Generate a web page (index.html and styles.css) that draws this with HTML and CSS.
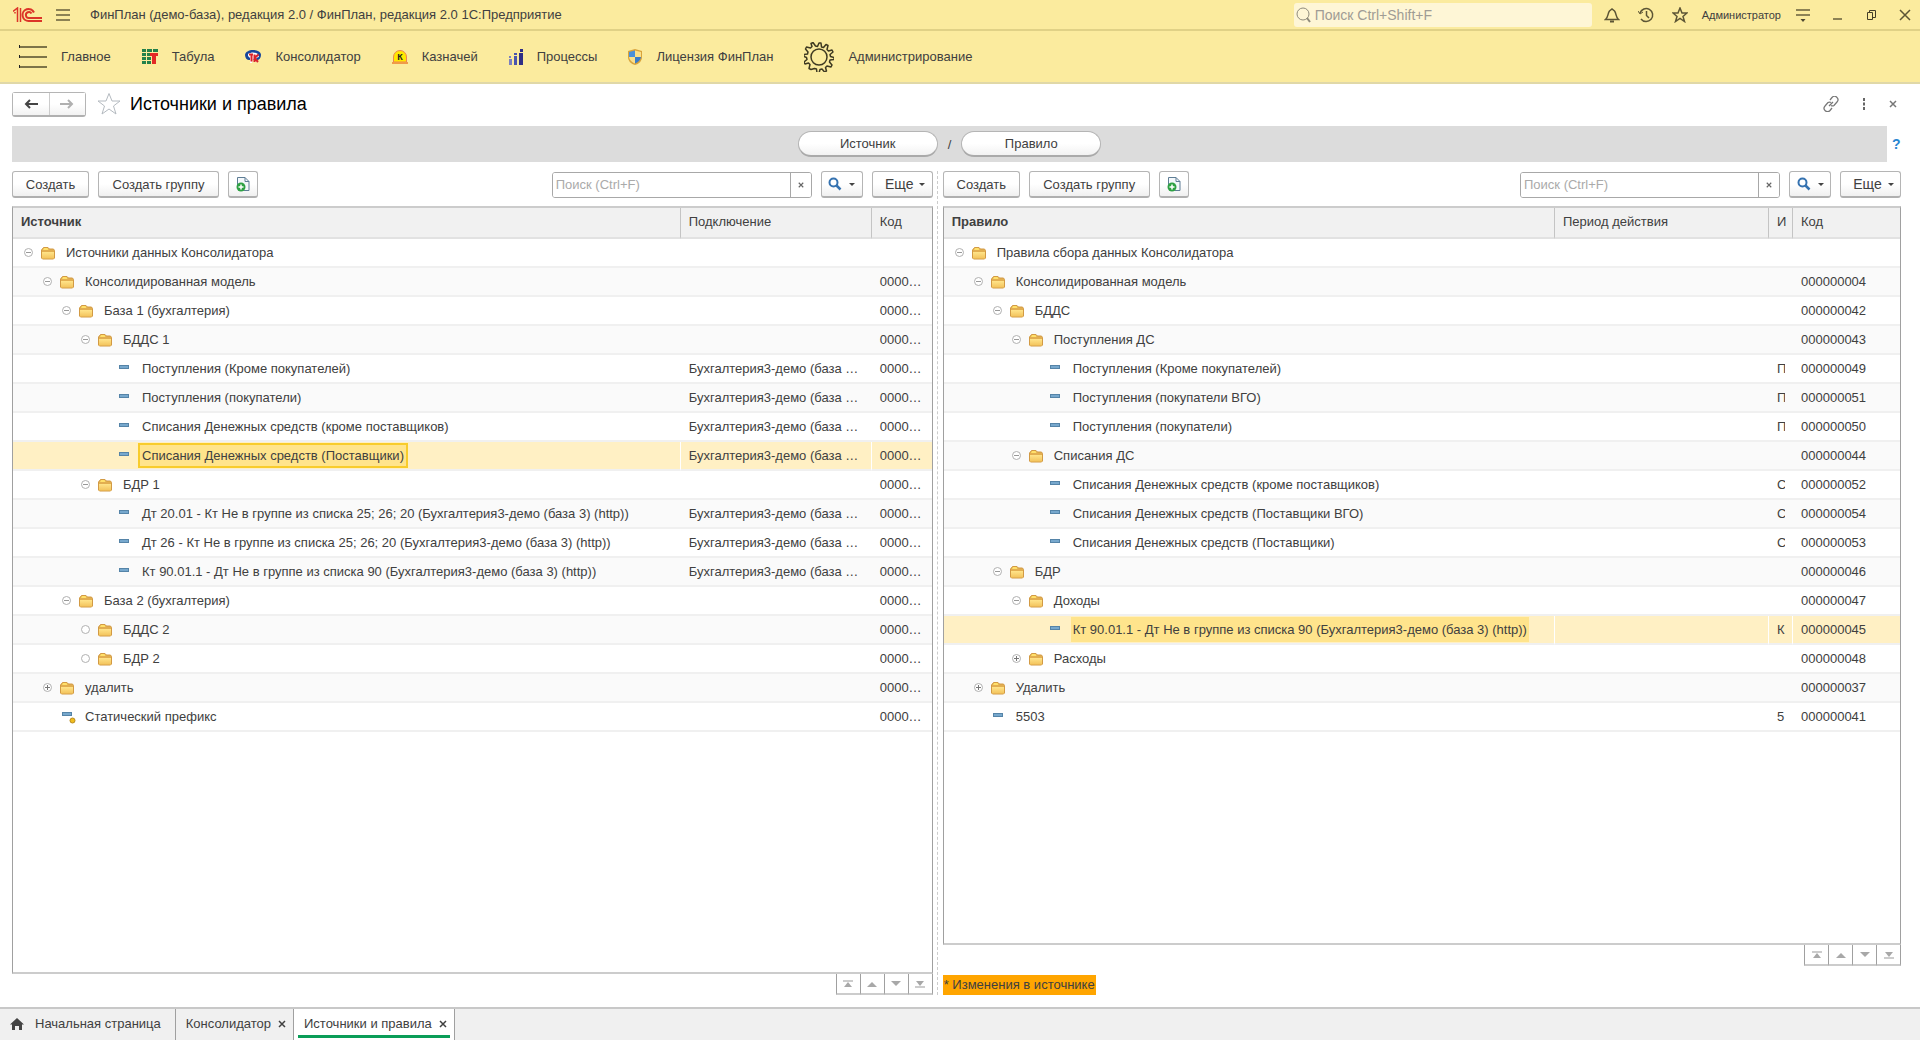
FILE: index.html
```html
<!DOCTYPE html>
<html lang="ru">
<head>
    <meta charset="UTF-8">
    <title>Источники и правила</title>
    <link rel="stylesheet" href="styles.css">
</head>
<body>
    <!-- shared icons -->
    <svg class="sprite" aria-hidden="true">
        <defs>
            <linearGradient id="folder-fill" x1="0" y1="0" x2="0" y2="1">
                <stop offset="0" stop-color="#ffe48a"/>
                <stop offset="1" stop-color="#f3c35c"/>
            </linearGradient>
        </defs>
        <symbol id="folder" viewBox="0 0 14 14">
            <path d="M.5 12V4l2-2.500h4.500L8.500 3h4l1 1.500V12l-1 1H1.500z" fill="#e2ae50" stroke="#d29a44"/>
            <path d="M2 4l1-2h3.500l1 2z" fill="#ffe06a"/>
            <path d="M1 6h12v6.500H1z" fill="url(#folder-fill)"/>
        </symbol>
        <symbol id="item" viewBox="0 0 10 6">
            <path d="M0 1h10v4H0z" fill="#5584a8"/>
            <path d="M1 2h8v2H1z" fill="#77a8cd"/>
        </symbol>
        <symbol id="item-predefined" viewBox="0 0 14 14">
            <path d="M0 2h10v4H0z" fill="#5584a8"/>
            <path d="M1 3h8v2H1z" fill="#77a8cd"/>
            <circle cx="10.500" cy="10.500" r="2.500" fill="#f0bd1e" stroke="#b98a1c"/>
        </symbol>
        <symbol id="minus" viewBox="0 0 9 9">
            <circle cx="4.500" cy="4.500" r="4" fill="#fff" stroke="#b0b0b0"/>
            <path d="M2 4.500h5" stroke="#999"/>
        </symbol>
        <symbol id="plus" viewBox="0 0 9 9">
            <circle cx="4.500" cy="4.500" r="4" fill="#fff" stroke="#b0b0b0"/>
            <path d="M2 4.500h5M4.500 2v5" stroke="#777"/>
        </symbol>
        <symbol id="empty" viewBox="0 0 9 9">
            <circle cx="4.500" cy="4.500" r="4" fill="#fff" stroke="#b0b0b0"/>
        </symbol>
        <symbol id="copy" viewBox="0 0 14 16">
            <path d="M1.500 9V1.500H9l4 4v9H8" fill="#f4f8fb" stroke="#5e7d95"/>
            <path d="M9 1.500v4h4" fill="none" stroke="#5e7d95"/>
            <circle cx="5" cy="11" r="4.500" fill="#2ea043"/>
            <path d="M5 8.500v5M2.500 11h5" stroke="#fff" stroke-width="1.500"/>
        </symbol>
        <symbol id="loupe" viewBox="0 0 14 14">
            <circle cx="5.500" cy="5.500" r="4" fill="#fff" stroke="#3572b0" stroke-width="2"/>
            <path d="M8.500 8.500l4 4" stroke="#3572b0" stroke-width="2.500"/>
        </symbol>
        <symbol id="cross" viewBox="0 0 8 8">
            <path d="M1 1l6 6M7 1l-6 6" fill="none" stroke="currentColor" stroke-width="1.500"/>
        </symbol>
        <symbol id="go-first" viewBox="0 0 10 8">
            <path d="M0 1h10" stroke="#ccc" stroke-width="2"/><path d="M1 7l4-5 4 5z" fill="#a8a8a8"/>
        </symbol>
        <symbol id="go-up" viewBox="0 0 10 8"><path d="M0 7l5-5 5 5z" fill="#a8a8a8"/></symbol>
        <symbol id="go-down" viewBox="0 0 10 8"><path d="M0 1l5 5 5-5z" fill="#a8a8a8"/></symbol>
        <symbol id="go-last" viewBox="0 0 10 8">
            <path d="M0 7h10" stroke="#ccc" stroke-width="2"/><path d="M1 1l4 5 4-5z" fill="#a8a8a8"/>
        </symbol>
    </svg>

    <header class="titlebar">
        <svg class="logo" width="29" height="16" viewBox="0 0 29 16" fill="none" stroke="#dc3428" stroke-width="2">
            <path d="M0 4.500L4.500 1v14M2 6.500V5M7.500 1v14" stroke-width="1.500"/>
            <path d="M21 5.500a6 6 0 1 0-5 8.500h13"/>
            <path d="M18.500 6.500a3 3 0 1 0-2.500 4.500h13"/>
        </svg>
        <button class="plain" aria-label="Меню">
            <svg width="14" height="14" viewBox="0 0 14 14" stroke="#8c8254" stroke-width="2"><path d="M0 2h14M0 7h14M0 12h14"/></svg>
        </button>
        <span class="app-name">ФинПлан (демо-база), редакция 2.0 / ФинПлан, редакция 2.0 1С:Предприятие</span>
        <div class="global-search">
            <svg width="15" height="16" viewBox="0 0 15 16" fill="none" stroke="#8f8b7c"><circle cx="7" cy="7" r="6"/><path d="M11 11l3 4" stroke-width="2"/></svg>
            <input type="text" aria-label="Поиск" placeholder="Поиск Ctrl+Shift+F">
        </div>
        <div class="system">
            <button class="plain" aria-label="Уведомления">
                <svg width="16" height="16" viewBox="0 0 16 16" fill="none" stroke="#5c5535" stroke-width="1.500"><path d="M1.500 12.500c3-2.500 2-6 4-8.500L8 2l2.500 2c2 2.500 1 6 4 8.500z"/><path d="M6 14.500h4" stroke-width="2"/></svg>
            </button>
            <button class="plain" aria-label="История">
                <svg width="16" height="16" viewBox="0 0 16 16" fill="none" stroke="#5c5535" stroke-width="1.500"><path d="M2 6a6.500 6.500 0 1 1 1 6M8.500 4v4.500L11 11"/><path d="M0 4l2 3 3-2" stroke-width="1"/></svg>
            </button>
            <button class="plain" aria-label="Избранное">
                <svg width="16" height="16" viewBox="0 0 16 16" fill="none" stroke="#5c5535" stroke-width="1.500"><path d="M8 1l2 5h5l-4 3.500 1.500 5L8 11.500l-4.500 3 1.500-5L1 6h5z"/></svg>
            </button>
            <a class="user" href="#">Администратор</a>
            <button class="plain" aria-label="Настройки">
                <svg width="14" height="16" viewBox="0 0 14 16"><path d="M0 3h14M0 8h14" stroke="#8c8254" stroke-width="2"/><path d="M4.500 12h5L7 15z" fill="#4d4730"/></svg>
            </button>
            <button class="plain" aria-label="Свернуть">
                <svg width="14" height="16" viewBox="0 0 14 16" stroke="#8c8254" stroke-width="2"><path d="M3 12h9"/></svg>
            </button>
            <button class="plain" aria-label="Развернуть">
                <svg width="14" height="16" viewBox="0 0 14 16" fill="none" stroke="#443e28"><path d="M3.500 5.500h5v7h-5zM5.500 5V3.500h6v7H9"/></svg>
            </button>
            <button class="plain" aria-label="Закрыть">
                <svg width="14" height="16" viewBox="0 0 14 16" stroke="#5c5535" stroke-width="1.500"><path d="M2 3l10 10M12 3L2 13"/></svg>
            </button>
        </div>
    </header>

    <nav class="sections">
        <a href="#">
            <svg width="28" height="24" viewBox="0 0 28 24" stroke="#7d7448" stroke-width="2"><path d="M0 2h28M0 12h28M0 22h28"/><path d="M.5 0v3M.5 10v3M.5 20v3" stroke="#222" stroke-width="1"/></svg>
            Главное
        </a>
        <a href="#">
            <svg width="16" height="16" viewBox="0 0 16 16"><path d="M0 0h4v3H0zM5 0h5v3H5zM11 0h5v3h-5zM0 4h4v3H0zM5 4h3v3H5zM0 8h4v3H0zM5 8h4v3H5zM0 12h4v3H0zM5 12h4v3H5z" fill="#23814a"/><path d="M8 4h8v3h-2v8h-4V7H8z" fill="#e22a26"/></svg>
            Табула
        </a>
        <a href="#">
            <svg width="16" height="16" viewBox="0 0 16 16"><path d="M0 6c0-3 4-5 8-5s8 2 8 5-2 5-4 5H4C2 11 0 9 0 6z" fill="#17479c"/><path d="M3 5c3-2 7-2 10 0l1 3-3 1 2 4h-2l-3-3-1 4H5V9L3 7z" fill="#fff"/><path d="M4 5.500h4M6.500 6v6.500M9.500 5.500V13M13.500 5.500l-4 3.500 3.500 4" stroke="#d9232a" stroke-width="2" fill="none"/></svg>
            Консолидатор
        </a>
        <a href="#">
            <svg width="16" height="16" viewBox="0 0 16 16"><path d="M1.500 13V8a6.500 6.500 0 0 1 13 0v5z" fill="#ffe900" stroke="#ef8354"/><path d="M0 14h16" stroke="#ef9a4a" stroke-width="2"/><text class="icon-letter" x="8" y="11" text-anchor="middle">К</text></svg>
            Казначей
        </a>
        <a href="#">
            <svg width="14" height="16" viewBox="0 0 14 16"><path d="M0 10h3v6H0zM0 7h2v2H0z" fill="#7a7fc0"/><path d="M5 7h3v9H5zM5 4h3v2H5z" fill="#4a55ad"/><path d="M10 4h4v12h-4zM11 0h3v3h-3z" fill="#2f2f86"/></svg>
            Процессы
        </a>
        <a href="#">
            <svg width="14" height="16" viewBox="0 0 14 16"><path d="M7 0l7 2v6c0 4-3 7-7 8-4-1-7-4-7-8V2z" fill="#d9a43c"/><path d="M7 1.500V8H1V3z" fill="#4a90d9"/><path d="M7 1.500V8h6V3z" fill="#fbe08a"/><path d="M7 8v6.500C4 13.500 1.500 11 1 8z" fill="#fbe08a"/><path d="M7 8v6.500c3-1 5.500-3.500 6-6.500z" fill="#3a7cc8"/></svg>
            Лицензия ФинПлан
        </a>
        <a href="#">
            <svg width="30" height="30" viewBox="0 0 30 30" fill="none" stroke="#3f3a22" stroke-width="1.500" stroke-linejoin="round"><circle cx="15" cy="15" r="8"/><path d="M13.500 4.500L15 1h2l.500 4 2 .5L22 2.500l2 1-1 4 1.500 1.500 3.500-1 1 2-3 2.500.500 2 3.500 1v2l-4 .500-.500 2 2.500 3-1 2-4-1-1.500 1.500 1 3.500-2 1-2.500-3-2 .500-1 3.500h-2l-.500-4-2-.500L7 27.500l-2-1 1-4L4.500 21 1 22l-1-2 3-2.500-.500-2L0 14.500v-2l3.500-.500.500-2L1.500 7l1-2 4 1L8 4.500 7 1.500l2-1 2.500 3.500z"/></svg>
            Администрирование
        </a>
    </nav>

    <main class="form">
        <div class="form-header">
            <div class="history">
                <button aria-label="Назад"><svg width="14" height="10" viewBox="0 0 14 10" fill="none" stroke="#444" stroke-width="2"><path d="M14 5H2M6 1L2 5l4 4"/></svg></button>
                <button aria-label="Вперед"><svg width="14" height="10" viewBox="0 0 14 10" fill="none" stroke="#b0b0b0" stroke-width="2"><path d="M0 5h12M8 1l4 4-4 4"/></svg></button>
            </div>
            <button class="plain" aria-label="В избранное">
                <svg width="24" height="24" viewBox="0 0 24 24" fill="none" stroke="#b4bac0"><path d="M12 1.500l3 7.500h8l-6.500 5 2.500 8-7-5-7 5 2.500-8L1 9h8z"/></svg>
            </button>
            <h1>Источники и правила</h1>
            <div class="form-tools">
                <button class="plain" aria-label="Ссылка">
                    <svg width="16" height="16" viewBox="0 0 16 16" fill="none" stroke="#777"><path d="M7 4l2-2.500a3 3 0 0 1 5 4.500l-3 3.500a3 3 0 0 1-3 0M9 12l-2 2.500a3 3 0 0 1-5-4.500l3-3.500a3 3 0 0 1 3 0M6 10l4-4" stroke-width="1.250"/></svg>
                </button>
                <button class="plain" aria-label="Еще">
                    <svg width="4" height="12" viewBox="0 0 4 12" fill="#666"><path d="M1 0h2v3H1zM1 4.500h2v3H1zM1 9h2v3H1z"/></svg>
                </button>
                <button class="plain gray" aria-label="Закрыть"><svg width="8" height="8"><use href="#cross"/></svg></button>
            </div>
        </div>

        <div class="link-row">
            <div class="link-bar">
                <button class="pill">Источник</button>
                <span>/</span>
                <button class="pill">Правило</button>
            </div>
            <a class="help" href="#">?</a>
        </div>

        <div class="panels">
            <section class="panel">
                <div class="toolbar">
                    <button class="btn">Создать</button>
                    <button class="btn btn-group">Создать группу</button>
                    <button class="btn btn-icon" aria-label="Скопировать"><svg width="14" height="16"><use href="#copy"/></svg></button>
                    <div class="search">
                        <input type="text" aria-label="Поиск источника" placeholder="Поиск (Ctrl+F)">
                        <button aria-label="Очистить"><svg width="6" height="6"><use href="#cross"/></svg></button>
                    </div>
                    <button class="btn btn-find" aria-label="Найти"><svg width="14" height="14"><use href="#loupe"/></svg><i class="caret"></i></button>
                    <button class="btn btn-more">Еще<i class="caret"></i></button>
                </div>
                <div class="list">
                    <table>
                        <colgroup><col><col class="c-conn"><col class="c-code-short"></colgroup>
                        <thead>
                            <tr><th class="main">Источник</th><th>Подключение</th><th>Код</th></tr>
                        </thead>
                        <tbody>
                            <tr><td><div class="node l0"><button class="toggle" aria-label="Свернуть"><svg><use href="#minus"/></svg></button><svg class="folder"><use href="#folder"/></svg><span>Источники данных Консолидатора</span></div></td><td></td><td></td></tr>
                            <tr><td><div class="node l1"><button class="toggle" aria-label="Свернуть"><svg><use href="#minus"/></svg></button><svg class="folder"><use href="#folder"/></svg><span>Консолидированная модель</span></div></td><td></td><td>0000…</td></tr>
                            <tr><td><div class="node l2"><button class="toggle" aria-label="Свернуть"><svg><use href="#minus"/></svg></button><svg class="folder"><use href="#folder"/></svg><span>База 1 (бухгалтерия)</span></div></td><td></td><td>0000…</td></tr>
                            <tr><td><div class="node l3"><button class="toggle" aria-label="Свернуть"><svg><use href="#minus"/></svg></button><svg class="folder"><use href="#folder"/></svg><span>БДДС 1</span></div></td><td></td><td>0000…</td></tr>
                            <tr><td><div class="node leaf l4"><svg class="item"><use href="#item"/></svg><span>Поступления (Кроме покупателей)</span></div></td><td>Бухгалтерия3-демо (база …</td><td>0000…</td></tr>
                            <tr><td><div class="node leaf l4"><svg class="item"><use href="#item"/></svg><span>Поступления (покупатели)</span></div></td><td>Бухгалтерия3-демо (база …</td><td>0000…</td></tr>
                            <tr><td><div class="node leaf l4"><svg class="item"><use href="#item"/></svg><span>Списания Денежных средств (кроме поставщиков)</span></div></td><td>Бухгалтерия3-демо (база …</td><td>0000…</td></tr>
                            <tr class="selected focused"><td><div class="node leaf l4"><svg class="item"><use href="#item"/></svg><span>Списания Денежных средств (Поставщики)</span></div></td><td>Бухгалтерия3-демо (база …</td><td>0000…</td></tr>
                            <tr><td><div class="node l3"><button class="toggle" aria-label="Свернуть"><svg><use href="#minus"/></svg></button><svg class="folder"><use href="#folder"/></svg><span>БДР 1</span></div></td><td></td><td>0000…</td></tr>
                            <tr><td><div class="node leaf l4"><svg class="item"><use href="#item"/></svg><span>Дт 20.01 - Кт Не в группе из списка 25; 26; 20 (Бухгалтерия3-демо (база 3) (http))</span></div></td><td>Бухгалтерия3-демо (база …</td><td>0000…</td></tr>
                            <tr><td><div class="node leaf l4"><svg class="item"><use href="#item"/></svg><span>Дт 26 - Кт Не в группе из списка 25; 26; 20 (Бухгалтерия3-демо (база 3) (http))</span></div></td><td>Бухгалтерия3-демо (база …</td><td>0000…</td></tr>
                            <tr><td><div class="node leaf l4"><svg class="item"><use href="#item"/></svg><span>Кт 90.01.1 - Дт Не в группе из списка 90 (Бухгалтерия3-демо (база 3) (http))</span></div></td><td>Бухгалтерия3-демо (база …</td><td>0000…</td></tr>
                            <tr><td><div class="node l2"><button class="toggle" aria-label="Свернуть"><svg><use href="#minus"/></svg></button><svg class="folder"><use href="#folder"/></svg><span>База 2 (бухгалтерия)</span></div></td><td></td><td>0000…</td></tr>
                            <tr><td><div class="node l3"><button class="toggle" aria-label="Пусто"><svg><use href="#empty"/></svg></button><svg class="folder"><use href="#folder"/></svg><span>БДДС 2</span></div></td><td></td><td>0000…</td></tr>
                            <tr><td><div class="node l3"><button class="toggle" aria-label="Пусто"><svg><use href="#empty"/></svg></button><svg class="folder"><use href="#folder"/></svg><span>БДР 2</span></div></td><td></td><td>0000…</td></tr>
                            <tr><td><div class="node l1"><button class="toggle" aria-label="Развернуть"><svg><use href="#plus"/></svg></button><svg class="folder"><use href="#folder"/></svg><span>удалить</span></div></td><td></td><td>0000…</td></tr>
                            <tr><td><div class="node leaf l1"><svg class="item predefined"><use href="#item-predefined"/></svg><span>Статический префикс</span></div></td><td></td><td>0000…</td></tr>
                        </tbody>
                    </table>
                </div>
                <div class="pager">
                    <button aria-label="В начало"><svg width="10" height="8"><use href="#go-first"/></svg></button>
                    <button aria-label="Вверх"><svg width="10" height="8"><use href="#go-up"/></svg></button>
                    <button aria-label="Вниз"><svg width="10" height="8"><use href="#go-down"/></svg></button>
                    <button aria-label="В конец"><svg width="10" height="8"><use href="#go-last"/></svg></button>
                </div>
            </section>

            <div class="splitter"></div>

            <section class="panel">
                <div class="toolbar">
                    <button class="btn">Создать</button>
                    <button class="btn btn-group">Создать группу</button>
                    <button class="btn btn-icon" aria-label="Скопировать"><svg width="14" height="16"><use href="#copy"/></svg></button>
                    <div class="search">
                        <input type="text" aria-label="Поиск правила" placeholder="Поиск (Ctrl+F)">
                        <button aria-label="Очистить"><svg width="6" height="6"><use href="#cross"/></svg></button>
                    </div>
                    <button class="btn btn-find" aria-label="Найти"><svg width="14" height="14"><use href="#loupe"/></svg><i class="caret"></i></button>
                    <button class="btn btn-more">Еще<i class="caret"></i></button>
                </div>
                <div class="list">
                    <table>
                        <colgroup><col><col class="c-period"><col class="c-mark"><col class="c-code"></colgroup>
                        <thead>
                            <tr><th class="main">Правило</th><th>Период действия</th><th>И</th><th>Код</th></tr>
                        </thead>
                        <tbody>
                            <tr><td><div class="node l0"><button class="toggle" aria-label="Свернуть"><svg><use href="#minus"/></svg></button><svg class="folder"><use href="#folder"/></svg><span>Правила сбора данных Консолидатора</span></div></td><td></td><td></td><td></td></tr>
                            <tr><td><div class="node l1"><button class="toggle" aria-label="Свернуть"><svg><use href="#minus"/></svg></button><svg class="folder"><use href="#folder"/></svg><span>Консолидированная модель</span></div></td><td></td><td></td><td>000000004</td></tr>
                            <tr><td><div class="node l2"><button class="toggle" aria-label="Свернуть"><svg><use href="#minus"/></svg></button><svg class="folder"><use href="#folder"/></svg><span>БДДС</span></div></td><td></td><td></td><td>000000042</td></tr>
                            <tr><td><div class="node l3"><button class="toggle" aria-label="Свернуть"><svg><use href="#minus"/></svg></button><svg class="folder"><use href="#folder"/></svg><span>Поступления ДС</span></div></td><td></td><td></td><td>000000043</td></tr>
                            <tr><td><div class="node leaf l4"><svg class="item"><use href="#item"/></svg><span>Поступления (Кроме покупателей)</span></div></td><td></td><td><div class="mark">П</div></td><td>000000049</td></tr>
                            <tr><td><div class="node leaf l4"><svg class="item"><use href="#item"/></svg><span>Поступления (покупатели ВГО)</span></div></td><td></td><td><div class="mark">П</div></td><td>000000051</td></tr>
                            <tr><td><div class="node leaf l4"><svg class="item"><use href="#item"/></svg><span>Поступления (покупатели)</span></div></td><td></td><td><div class="mark">П</div></td><td>000000050</td></tr>
                            <tr><td><div class="node l3"><button class="toggle" aria-label="Свернуть"><svg><use href="#minus"/></svg></button><svg class="folder"><use href="#folder"/></svg><span>Списания ДС</span></div></td><td></td><td></td><td>000000044</td></tr>
                            <tr><td><div class="node leaf l4"><svg class="item"><use href="#item"/></svg><span>Списания Денежных средств (кроме поставщиков)</span></div></td><td></td><td><div class="mark">С</div></td><td>000000052</td></tr>
                            <tr><td><div class="node leaf l4"><svg class="item"><use href="#item"/></svg><span>Списания Денежных средств (Поставщики ВГО)</span></div></td><td></td><td><div class="mark">С</div></td><td>000000054</td></tr>
                            <tr><td><div class="node leaf l4"><svg class="item"><use href="#item"/></svg><span>Списания Денежных средств (Поставщики)</span></div></td><td></td><td><div class="mark">С</div></td><td>000000053</td></tr>
                            <tr><td><div class="node l2"><button class="toggle" aria-label="Свернуть"><svg><use href="#minus"/></svg></button><svg class="folder"><use href="#folder"/></svg><span>БДР</span></div></td><td></td><td></td><td>000000046</td></tr>
                            <tr><td><div class="node l3"><button class="toggle" aria-label="Свернуть"><svg><use href="#minus"/></svg></button><svg class="folder"><use href="#folder"/></svg><span>Доходы</span></div></td><td></td><td></td><td>000000047</td></tr>
                            <tr class="selected"><td><div class="node leaf l4"><svg class="item"><use href="#item"/></svg><span>Кт 90.01.1 - Дт Не в группе из списка 90 (Бухгалтерия3-демо (база 3) (http))</span></div></td><td></td><td><div class="mark">К</div></td><td>000000045</td></tr>
                            <tr><td><div class="node l3"><button class="toggle" aria-label="Развернуть"><svg><use href="#plus"/></svg></button><svg class="folder"><use href="#folder"/></svg><span>Расходы</span></div></td><td></td><td></td><td>000000048</td></tr>
                            <tr><td><div class="node l1"><button class="toggle" aria-label="Развернуть"><svg><use href="#plus"/></svg></button><svg class="folder"><use href="#folder"/></svg><span>Удалить</span></div></td><td></td><td></td><td>000000037</td></tr>
                            <tr><td><div class="node leaf l1"><svg class="item"><use href="#item"/></svg><span>5503</span></div></td><td></td><td><div class="mark">5</div></td><td>000000041</td></tr>
                        </tbody>
                    </table>
                </div>
                <div class="pager">
                    <button aria-label="В начало"><svg width="10" height="8"><use href="#go-first"/></svg></button>
                    <button aria-label="Вверх"><svg width="10" height="8"><use href="#go-up"/></svg></button>
                    <button aria-label="Вниз"><svg width="10" height="8"><use href="#go-down"/></svg></button>
                    <button aria-label="В конец"><svg width="10" height="8"><use href="#go-last"/></svg></button>
                </div>
                <div class="notice">* Изменения в источнике</div>
            </section>
        </div>
    </main>

    <footer class="tabs">
        <a class="tab home" href="#">
            <svg width="14" height="12" viewBox="0 0 14 12" fill="#444"><path d="M7 0l7 6.500h-2V12H9V8H5v4H2V6.500H0z"/></svg>
            Начальная страница
        </a>
        <div class="tab"><a href="#">Консолидатор</a><button class="plain" aria-label="Закрыть"><svg width="8" height="8"><use href="#cross"/></svg></button></div>
        <div class="tab active"><a href="#">Источники и правила</a><button class="plain" aria-label="Закрыть"><svg width="8" height="8"><use href="#cross"/></svg></button></div>
    </footer>
</body>
</html>
```
FILE: styles.css
```css
* {
    box-sizing: border-box;
}

body {
    display: flex;
    flex-direction: column;
    min-height: 100vh;
    margin: 0;
    background: #fff;
    color: #404040;
    font-family: "Liberation Sans", Arial, sans-serif;
    font-size: 13px;
}

button, input {
    font: inherit;
    color: inherit;
}

button {
    padding: 0;
    cursor: pointer;
}

a {
    color: inherit;
    text-decoration: none;
}

svg {
    display: block;
    flex: none;
}

.sprite {
    position: absolute;
    width: 0;
    height: 0;
}

.plain {
    display: flex;
    border: none;
    background: none;
}

.gray {
    color: #777;
}

/* top yellow bars */
.titlebar {
    display: flex;
    align-items: center;
    height: 31px;
    padding: 0 8px 0 13px;
    background: #fbeb9e;
    border-bottom: 2px solid #e0d186;
}

.logo {
    margin-right: 14px;
}

.app-name {
    margin-left: 20px;
}

.global-search {
    display: flex;
    align-items: center;
    gap: 4px;
    width: 298px;
    height: 24px;
    margin-left: auto;
    padding-left: 2px;
    border-radius: 3px;
    background: #fef6d6;
}

.global-search input {
    flex: 1;
    min-width: 0;
    padding: 0;
    border: none;
    outline: none;
    background: none;
    font-size: 14px;
}

.global-search input::placeholder {
    color: #a09c94;
}

.system {
    display: flex;
    align-items: center;
    gap: 20px;
    margin-left: 13px;
}

.system button {
    justify-content: center;
    width: 14px;
}

.user {
    margin: 0 -5px;
    font-size: 11px;
}

.sections {
    display: flex;
    align-items: center;
    gap: 31px;
    height: 53px;
    padding-left: 19px;
    background: #fbeb9e;
    border-bottom: 2px solid #e0d8a8;
}

.sections a {
    display: flex;
    align-items: center;
    gap: 14px;
}

.icon-letter {
    font-size: 9px;
    font-weight: bold;
    fill: #222;
}

/* form */
.form {
    display: flex;
    flex: 1;
    flex-direction: column;
    padding: 7px 19px 12px 12px;
}

.form-header {
    display: flex;
    align-items: center;
    height: 26px;
    margin-bottom: 9px;
}

.history {
    display: flex;
    width: 74px;
    height: 25px;
    margin-right: 11px;
    border: 1px solid #b5b5b5;
    border-bottom: 2px solid #b0b0b0;
    border-radius: 3px;
}

.history button {
    display: flex;
    flex: 1;
    align-items: center;
    justify-content: center;
    border: none;
    background: linear-gradient(#fff 50%, #f2f2f2);
}

.history button + button {
    border-left: 1px solid #ccc;
}

h1 {
    margin: 0 0 0 9px;
    color: #000;
    font-size: 18px;
    font-weight: normal;
}

.form-tools {
    display: flex;
    align-items: center;
    gap: 23px;
    margin-left: auto;
    padding-right: 4px;
}

.link-row {
    display: flex;
    align-items: center;
    margin-bottom: 9px;
}

.link-bar {
    display: flex;
    flex: 1;
    align-items: center;
    justify-content: center;
    gap: 10px;
    height: 36px;
    background: #dcdcdc;
}

.pill {
    width: 140px;
    height: 26px;
    border: 1px solid #b5b5b5;
    border-bottom: 2px solid #aaa;
    border-radius: 13px;
    background: linear-gradient(#fff 50%, #f2f2f2);
}

.help {
    width: 14px;
    padding-left: 5px;
    color: #2a86d1;
    font-size: 14px;
    font-weight: bold;
}

.panels {
    display: grid;
    flex: 1;
    grid-template-columns: 49fr 10px 51fr;
}

.splitter {
    justify-self: center;
    border-left: 1px dashed #ccc;
}

.panel {
    display: flex;
    flex-direction: column;
    min-width: 0;
}

.toolbar {
    display: flex;
    align-items: center;
    height: 27px;
    margin-bottom: 8px;
    gap: 9px;
}

.btn {
    display: flex;
    align-items: center;
    justify-content: center;
    width: 77px;
    height: 27px;
    border: 1px solid #b5b5b5;
    border-bottom: 2px solid #b0b0b0;
    border-radius: 3px;
    background: linear-gradient(#fff 50%, #f0f0f0);
}

.btn-group {
    width: 121px;
}

.btn-icon {
    width: 30px;
}

.btn-find {
    gap: 7px;
    width: 42px;
}

.btn-more {
    gap: 6px;
    width: 61px;
    padding-left: 6px;
    font-size: 14px;
}

.caret {
    border: 3px solid transparent;
    border-top-color: #444;
    border-bottom: none;
}

.search {
    display: flex;
    width: 260px;
    height: 26px;
    margin-left: auto;
    border: 1px solid #a8a8a8;
    border-radius: 3px;
    overflow: hidden;
}

.search input {
    flex: 1;
    min-width: 0;
    padding: 0 3px;
    border: none;
    outline: none;
}

.search input::placeholder {
    color: #aaa;
}

.search button {
    display: flex;
    align-items: center;
    justify-content: center;
    width: 21px;
    border: none;
    border-left: 1px solid #a8a8a8;
    background: #fff;
    color: #666;
}

/* tree lists */
.list {
    flex: 1;
    border: 1px solid #a0a0a0;
    border-top: 2px solid #ccc;
    border-bottom: 2px solid #ccc;
}

table {
    width: 100%;
    border-spacing: 0;
    table-layout: fixed;
}

.c-conn {
    width: 191px;
}

.c-code-short {
    width: 61px;
}

.c-period {
    width: 214px;
}

.c-mark {
    width: 24px;
}

.c-code {
    width: 108px;
}

th {
    height: 31px;
    padding: 0 0 2px 8px;
    border-bottom: 2px solid #e2e2e2;
    border-left: 1px solid #c4c4c4;
    background: #f1f1f1;
    font-weight: normal;
    text-align: left;
}

th.main {
    border-left: none;
    font-weight: bold;
}

td {
    height: 29px;
    padding: 0 0 0 9px;
    border-bottom: 2px solid #f0f0f0;
    white-space: nowrap;
}

td:first-child {
    padding-left: 0;
}

tbody tr:nth-child(even) {
    background: #fafafa;
}

.mark {
    width: 8px;
    overflow: hidden;
}

.node {
    display: flex;
    align-items: center;
    height: 27px;
}

.l0 { padding-left: 11px; }
.l1 { padding-left: 30px; }
.l2 { padding-left: 49px; }
.l3 { padding-left: 68px; }
.l4 { padding-left: 87px; }

.toggle {
    width: 9px;
    height: 9px;
    margin-right: 8px;
    border: none;
    background: none;
}

.toggle svg {
    width: 9px;
    height: 9px;
}

.folder {
    width: 14px;
    height: 14px;
    margin-right: 11px;
}

.item {
    width: 10px;
    height: 6px;
    margin: 0 9px 3px 19px;
}

.predefined {
    width: 14px;
    height: 14px;
    margin: 0 5px 0 19px;
}

.leaf span {
    padding: 4px;
}

tbody tr.selected {
    background: #fff0c4;
}

.selected td + td {
    border-left: 1px solid #fff;
    padding-left: 8px;
}

.selected .node span {
    padding: 5px 2px;
    margin: 0 2px;
    background: #ffe48c;
}

.focused .node span {
    margin: 0;
    padding: 3px 2px;
    border: 2px solid #f8cc2c;
}

.pager {
    display: flex;
    align-self: flex-end;
}

.pager button {
    display: flex;
    align-items: center;
    justify-content: center;
    width: 24px;
    height: 21px;
    border: none;
    border-bottom: 2px solid #ccc;
    border-left: 1px solid #a0a0a0;
    background: #fff;
}

.pager button:last-child {
    width: 25px;
    border-right: 1px solid #a0a0a0;
}

.notice {
    align-self: flex-start;
    margin-top: 9px;
    padding: 0 1px;
    background: #ffa500;
    line-height: 20px;
}

/* open windows */
.tabs {
    display: flex;
    height: 33px;
    background: #f0f0f0;
    border-top: 2px solid #c8c8c8;
}

.tab {
    display: flex;
    align-items: center;
    gap: 7px;
    padding: 0 7px 2px 10px;
    border-right: 1px solid #a0a0a0;
}

.home {
    gap: 11px;
    padding-right: 14px;
}

.active {
    background: linear-gradient(#0a9d58, #0a9d58) center bottom 2px / calc(100% - 8px) 3px no-repeat #fff;
}
```
